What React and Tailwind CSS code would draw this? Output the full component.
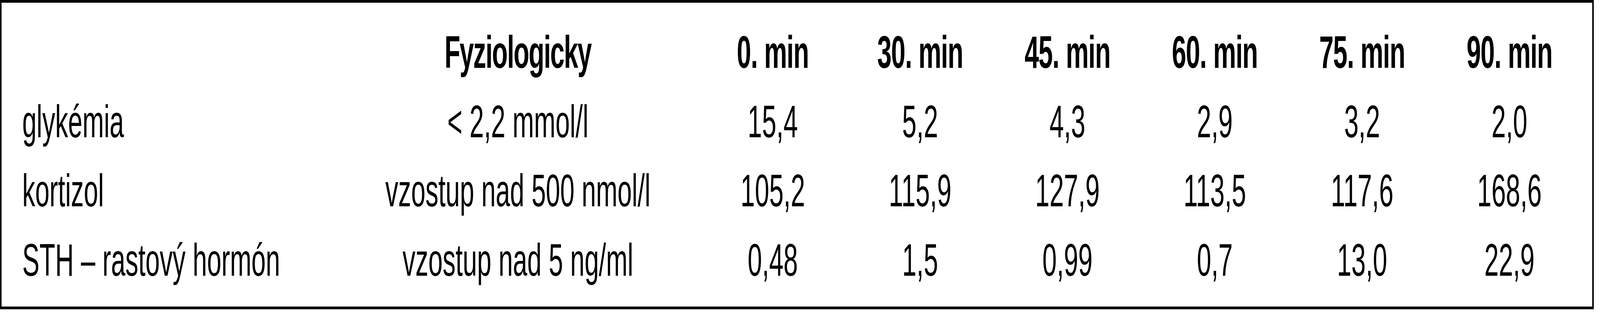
import { useEffect, useState } from 'react'

const times = ['0. min', '30. min', '45. min', '60. min', '75. min', '90. min']

const rows = [
  { name: 'glykémia', norm: '< 2,2 mmol/l', values: ['15,4', '5,2', '4,3', '2,9', '3,2', '2,0'] },
  { name: 'kortizol', norm: 'vzostup nad 500 nmol/l', values: ['105,2', '115,9', '127,9', '113,5', '117,6', '168,6'] },
  { name: 'STH – rastový hormón', norm: 'vzostup nad 5 ng/ml', values: ['0,48', '1,5', '0,99', '0,7', '13,0', '22,9'] },
]

// the table is drawn for a 7200px wide frame; the browser may give a narrower one
function useFrameScale() {
  const [sx, setSx] = useState(() => Math.min(1, window.innerWidth / 7200))
  useEffect(() => {
    const onResize = () => setSx(Math.min(1, window.innerWidth / 7200))
    window.addEventListener('resize', onResize)
    return () => window.removeEventListener('resize', onResize)
  }, [])
  return sx
}

export default function App() {
  const sx = useFrameScale()

  return (
    <div className="w-screen h-[800px] overflow-hidden bg-white">
      <div
        className="w-[7200px] h-[800px] origin-top-left bg-white text-black font-['Liberation_Sans',Arial,sans-serif] text-[116px] leading-[177.5px]"
        style={{ transform: `scaleX(${sx})` }}
      >
        <div className="w-[7172px] h-[793px] border-[7px] border-black pt-[39px] pb-[30px] pr-[41px]">
          <div className="grid grid-cols-[1508px_1631px_repeat(6,663px)] auto-rows-[177.5px]">
            {/* header */}
            <div></div>
            <div className="text-center font-bold tracking-[-3px] whitespace-nowrap">Fyziologicky</div>
            {times.map((t) => (
              <div key={t} className="text-center font-bold tracking-[-2px] whitespace-nowrap">{t}</div>
            ))}

            {rows.map((row) => (
              <div key={row.name} className="contents">
                <div className="pl-[93px] whitespace-nowrap">{row.name}</div>
                <div className="text-center whitespace-nowrap">{row.norm}</div>
                {row.values.map((v, i) => (
                  <div key={i} className="text-center whitespace-nowrap">{v}</div>
                ))}
              </div>
            ))}
          </div>
        </div>
      </div>
    </div>
  )
}
